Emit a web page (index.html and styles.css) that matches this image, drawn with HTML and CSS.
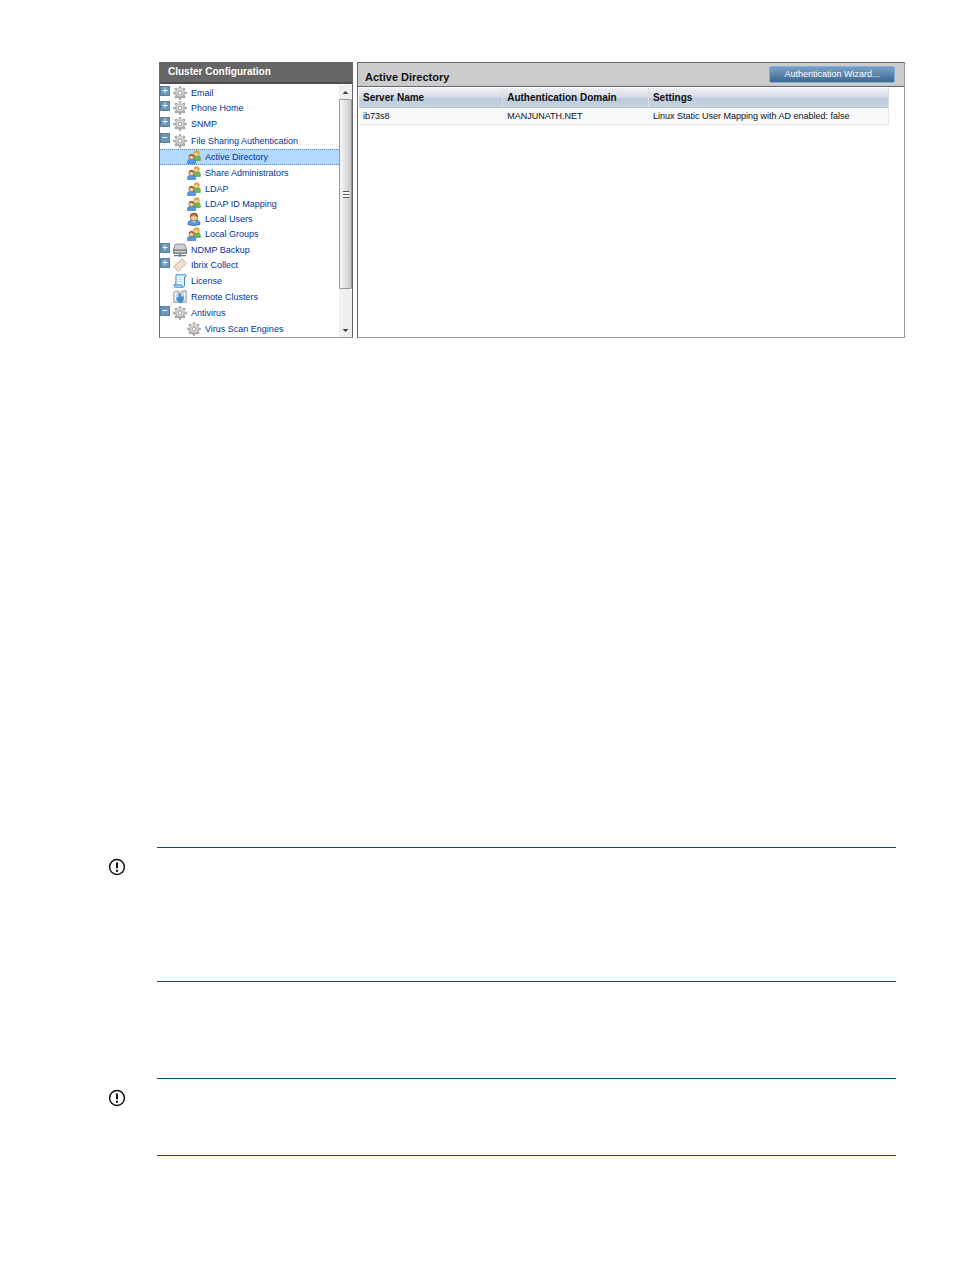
FILE: index.html
```html
<!DOCTYPE html>
<html lang="en">
<head>
<meta charset="utf-8">
<title>Cluster Configuration</title>
<link rel="stylesheet" href="styles.css">
</head>
<body>
<svg class="defs" aria-hidden="true">
  <defs>
    <linearGradient id="steel" x1="0" y1="0" x2="0" y2="1"><stop offset="0" stop-color="#d6d6d6"/><stop offset="1" stop-color="#a2a2a2"/></linearGradient>
    <symbol id="gear" viewBox="0 0 14 14">
      <g stroke="#a6a6a6" stroke-width="2.600"><path d="M7 .2v13.600M.2 7h13.600M2.200 2.200l9.600 9.600M11.800 2.200l-9.600 9.600"/></g>
      <circle cx="7" cy="7" r="5.200" fill="url(#steel)"/>
      <circle cx="7" cy="7" r="3.600" fill="#d2d2d2"/>
      <circle cx="7" cy="7" r="1.800" fill="#fff" stroke="#a0a0a0" stroke-width=".8"/>
    </symbol>
    <symbol id="group" viewBox="0 0 14 14">
      <path d="M6.500 10.500V8q0-2.300 2.500-2.500h2q2.300.2 2.300 2.500v2.500z" fill="#6bb558" stroke="#4d9645" stroke-width=".6"/>
      <circle cx="9.600" cy="3.600" r="2.700" fill="#f6cf96" stroke="#b98635" stroke-width=".6"/>
      <path d="M6.900 3.300Q7.100.5 9.700.5t2.800 3.200Q10 3 9 2.200 8.300 3 6.900 3.300" fill="#dda33b"/>
      <path d="M.5 13.500v-1.800Q.6 9.400 3 9.300h3q2.500.1 2.600 2.400v1.800z" fill="#5598e8" stroke="#2f6cbd" stroke-width=".6"/>
      <circle cx="4.500" cy="7" r="2.600" fill="#f6c99b" stroke="#8f5b2c" stroke-width=".6"/>
      <path d="M1.800 6.800Q1.900 4.100 4.500 4.100T7.200 7Q5 6.300 4.100 5.500 3.200 6.500 1.800 6.800" fill="#96602f"/>
    </symbol>
    <symbol id="user" viewBox="0 0 14 14">
      <path d="M1.200 12.600Q.5 9 4.300 8.300h5.400q3.800.7 3.100 4.300Q7 14.300 1.200 12.600z" fill="#569ce9" stroke="#225cae" stroke-width=".8"/>
      <path d="M5 8.300l2 2.500 2-2.500z" fill="#fff"/>
      <circle cx="7" cy="5" r="3.800" fill="#f9cf9f" stroke="#87501e" stroke-width=".7"/>
      <path d="M3 5Q3 .7 7 .7T11 5Q8 4.300 6.600 2.900 5.300 4.300 3 5" fill="#a5642b"/>
    </symbol>
    <symbol id="drive" viewBox="0 0 14 14">
      <path d="M2.500 1h9l2 5v4.500h-13V6z" fill="#cfcfcf" stroke="#777" stroke-width=".8"/>
      <path d="M.6 6h12.800v2H.6zM.6 9h12.800v2H.6z" fill="#777"/>
      <path d="M1.500 6.800h11M1.500 9.800h11" stroke="#ddd" stroke-width=".6"/>
      <path d="M1 12.700h12M7 11v2" stroke="#555"/><path d="M5.500 11.500h3v2h-3z" fill="#3f83cf"/>
    </symbol>
    <symbol id="ticket" viewBox="0 0 14 14">
      <path d="M.5 8.800L9 .8l1.600 1.600q-.1 1.400 1.300 1.300l1.600 1.600-8.400 8-1.600-1.600q.1-1.500-1.300-1.400z" fill="#f3e4d2" stroke="#b79c84" stroke-width=".8"/>
      <path d="M4.500 8.100L8.700 4l1.400 1.500-4.200 4z" fill="#fff6e9" stroke="#c9b19b" stroke-width=".6"/>
    </symbol>
    <symbol id="scroll" viewBox="0 0 14 14">
      <path d="M3 .8h9.500q1.200.9 0 2.200h-1v8.500q0 1.700-1.800 1.700H1.800Q.3 12.500 1.200 11H2.800z" fill="#e5f4ff" stroke="#3485cb"/>
      <path d="M4.700 3.500h5M4.700 5.500h5M4.700 7.500h5" stroke="#c2dff5" stroke-width=".8"/>
      <path d="M1.300 11h7.400q-.2 1.400 1 2" fill="#b8dbf5" stroke="#3485cb"/>
    </symbol>
    <symbol id="remote" viewBox="0 0 14 14">
      <path d="M.7 2.500l2-1.500h3.300v11.500H.7zM7.500 2l1.500-1.300h4.300v11.800H7.500z" fill="#d6d6d6" stroke="#999" stroke-width=".8"/>
      <path d="M2.700 3v7M11.500 3v7" stroke="#fff"/>
      <path d="M5.500 3.500H8v3l2.800-.5v4.500L8.500 13H6L3.500 10V7l2 .5z" fill="#398fd2" stroke="#8bbce3" stroke-width=".6"/>
    </symbol>
    <symbol id="notice" viewBox="0 0 18 18">
      <circle cx="9" cy="9" r="7.400" fill="none" stroke="#111" stroke-width="1.500"/>
      <path d="M9 4.500v5.700M9 11.700v2" stroke="#111" stroke-width="2"/>
    </symbol>
  </defs>
</svg>
<main class="page">
  <div class="app">
    <nav class="sidebar" aria-label="Cluster Configuration">
      <h2 class="sidebar-title">Cluster Configuration</h2>
      <div class="tree-wrap">
        <ul class="tree">
          <li class="row short"><button class="toggle" aria-label="Expand Email">+</button><svg class="icon"><use href="#gear"/></svg><a href="#">Email</a></li>
          <li class="row"><button class="toggle" aria-label="Expand Phone Home">+</button><svg class="icon"><use href="#gear"/></svg><a href="#">Phone Home</a></li>
          <li class="row"><button class="toggle" aria-label="Expand SNMP">+</button><svg class="icon"><use href="#gear"/></svg><a href="#">SNMP</a></li>
          <li class="row tall"><button class="toggle" aria-label="Collapse File Sharing Authentication">−</button><svg class="icon"><use href="#gear"/></svg><a href="#">File Sharing Authentication</a></li>
          <li class="row child selected"><svg class="icon"><use href="#group"/></svg><a href="#">Active Directory</a></li>
          <li class="row child"><svg class="icon"><use href="#group"/></svg><a href="#">Share Administrators</a></li>
          <li class="row child short"><svg class="icon"><use href="#group"/></svg><a href="#">LDAP</a></li>
          <li class="row child short"><svg class="icon"><use href="#group"/></svg><a href="#">LDAP ID Mapping</a></li>
          <li class="row child short"><svg class="icon"><use href="#user"/></svg><a href="#">Local Users</a></li>
          <li class="row child"><svg class="icon"><use href="#group"/></svg><a href="#">Local Groups</a></li>
          <li class="row short"><button class="toggle" aria-label="Expand NDMP Backup">+</button><svg class="icon"><use href="#drive"/></svg><a href="#">NDMP Backup</a></li>
          <li class="row"><button class="toggle" aria-label="Expand Ibrix Collect">+</button><svg class="icon"><use href="#ticket"/></svg><a href="#">Ibrix Collect</a></li>
          <li class="row leaf"><svg class="icon"><use href="#scroll"/></svg><a href="#">License</a></li>
          <li class="row leaf"><svg class="icon"><use href="#remote"/></svg><a href="#">Remote Clusters</a></li>
          <li class="row"><button class="toggle" aria-label="Collapse Antivirus">−</button><svg class="icon"><use href="#gear"/></svg><a href="#">Antivirus</a></li>
          <li class="row child"><svg class="icon"><use href="#gear"/></svg><a href="#">Virus Scan Engines</a></li>
        </ul>
        <div class="scrollbar" aria-hidden="true">
          <svg class="arrow" viewBox="0 0 12 14"><path d="M3 9l3-3 3 3z"/></svg>
          <div class="thumb"><span class="grip"></span></div>
          <svg class="arrow" viewBox="0 0 12 14"><path d="M3 6l3 3 3-3z"/></svg>
        </div>
      </div>
    </nav>
    <section class="content">
      <header class="content-head">
        <h1 class="content-title">Active Directory</h1>
        <button class="wizard">Authentication Wizard...</button>
      </header>
      <table class="grid">
        <thead><tr><th class="col-server">Server Name</th><th class="col-domain">Authentication Domain</th><th>Settings</th></tr></thead>
        <tbody><tr><td>ib73s8</td><td>MANJUNATH.NET</td><td>Linux Static User Mapping with AD enabled: false</td></tr></tbody>
      </table>
    </section>
  </div>
  <aside class="note note-first"><svg class="note-icon" role="img" aria-label="Important"><use href="#notice"/></svg><div class="note-body"></div></aside>
  <aside class="note note-second"><svg class="note-icon" role="img" aria-label="Important"><use href="#notice"/></svg><div class="note-body"></div></aside>
</main>
</body>
</html>
```
FILE: styles.css
```css
* { box-sizing: border-box; }
body {
  margin: 0;
  background: #fff;
  color: #111;
  font: 9px/16px "Liberation Sans", Arial, sans-serif;
}
.defs { position: absolute; width: 0; height: 0; }
.page { padding: 62px 49px 114px 108px; }
.app { display: flex; gap: 4px; margin-left: 51px; }

.sidebar {
  flex: 0 0 194px;
  border: 1px solid #666;
  border-bottom-color: #999;
}
.sidebar-title {
  margin: 0;
  padding: 0 8px;
  height: 21px;
  border-bottom: 2px solid #4c4c4c;
  background: #666;
  color: #fff;
  font-size: 10px;
  line-height: 18px;
}
.tree-wrap { display: flex; padding-top: 1px; }
.tree { flex: 1; margin: 0; padding: 0; list-style: none; }
.row { display: flex; align-items: center; height: 16px; }
.row.short { height: 15px; }
.row.tall { height: 17px; }
.row.child { padding-left: 27px; }
.row.leaf { padding-left: 13px; }
.row.selected {
  background: #b3d9ff;
  border: 1px dotted #5588bb;
  border-width: 1px 0;
}
.row a { color: #039; text-decoration: none; white-space: nowrap; }
.icon { width: 14px; height: 14px; margin-right: 4px; flex: none; }
.toggle {
  align-self: flex-start;
  width: 10px;
  height: 10px;
  margin: 1px 3px 0 0;
  padding: 0;
  border: 1px solid #5580a5;
  background: #7095b7;
  color: #fff;
  font: 10px/8px "Liberation Sans", Arial, sans-serif;
}

.scrollbar {
  display: flex;
  flex-direction: column;
  width: 13px;
  background: #f0f0f0;
}
.arrow { width: 13px; height: 14px; fill: #444; }
.thumb {
  display: flex;
  align-items: center;
  justify-content: center;
  height: 190px;
  margin-bottom: auto;
  border: 1px solid #999;
  border-radius: 1px;
  background: linear-gradient(90deg, #f5f5f5, #e6e6e8 45%, #c4c4c8);
}
.grip {
  width: 6px;
  height: 7px;
  background: repeating-linear-gradient(#555 0 1px, #fff 1px 3px);
}

.content {
  flex: 1;
  border: 1px solid #999;
  border-top-color: #666;
  border-left-color: #666;
}
.content-head {
  display: flex;
  align-items: center;
  justify-content: space-between;
  height: 24px;
  padding: 0 9px 0 7px;
  border-bottom: 1px solid #666;
  background: #ccc;
}
.content-title { margin: 4px 0 0; font-size: 11px; line-height: 16px; }
.wizard {
  width: 126px;
  height: 17px;
  padding: 0;
  border: 1px solid #7fb2e5;
  border-radius: 2px;
  background: linear-gradient(#7a9fc2, #5f88b0 45%, #3f688f);
  color: #fff;
  font: 9px/15px "Liberation Sans", Arial, sans-serif;
}
.grid {
  width: calc(100% - 16px);
  margin: 1px 15px 0 1px;
  border-collapse: separate;
  border-spacing: 0;
  table-layout: fixed;
}
.grid th, .grid td { padding: 0 4px; text-align: left; white-space: nowrap; }
.grid th {
  height: 20px;
  border-right: 1px solid #ddd;
  border-bottom: 1px solid #b9c6d4;
  background: linear-gradient(#edf1f5, #d3dce6 50%, #bccbdb 55%, #c6d3e1);
  font-size: 10px;
}
.grid td {
  height: 17px;
  border-bottom: 1px solid #e8e8e8;
  background: #f8f9fb;
}
.grid td:last-child { border-right: 1px solid #e8e8e8; }
.col-server { width: 27.2%; }
.col-domain { width: 27.5%; }

.note { display: flex; margin-right: 9px; }
.note-icon { width: 18px; height: 18px; margin: 11px 31px 0 0; flex: none; }
.note-body { flex: 1; border: 1px solid #004f87; border-width: 1px 0; }
.note-first { margin-top: 509px; min-height: 135px; }
.note-second { margin-top: 96px; min-height: 78px; }
```
